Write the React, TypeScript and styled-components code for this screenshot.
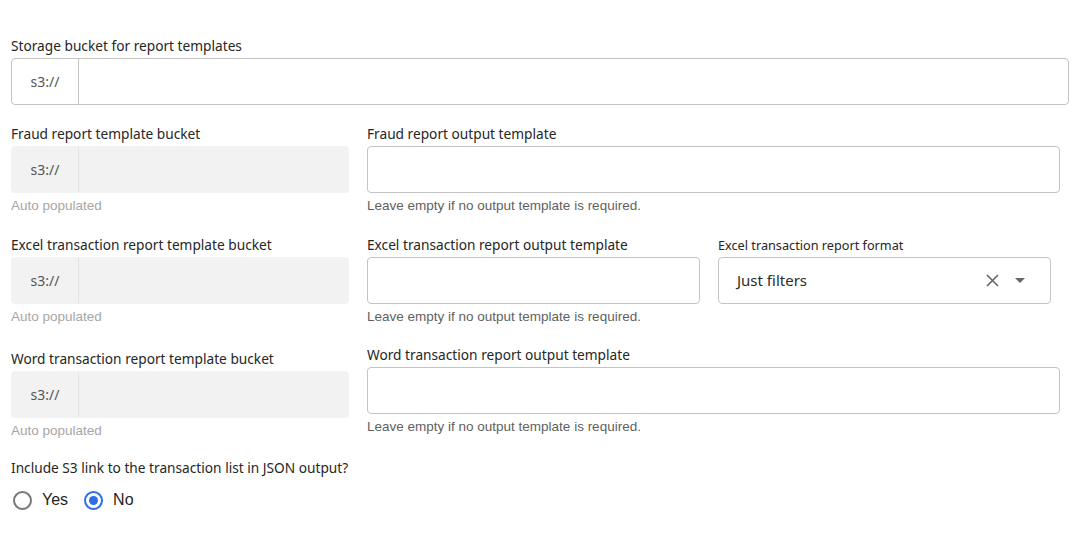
import React from "react";
import styled, { createGlobalStyle } from "styled-components";

const GlobalStyle = createGlobalStyle`
  html, body { margin: 0; padding: 0; background: #ffffff; }
  body { font-family: "Noto Sans", "Open Sans", sans-serif; color: #2b2b2b; }
  * { box-sizing: border-box; }
`;

const Page = styled.div`
  padding: 35px 0 0 11px;
  display: flex;
  flex-direction: column;
`;

const Row = styled.div<{ $gapAfter?: number }>`
  display: flex;
  align-items: flex-start;
  gap: 18px;
  margin-bottom: ${(p) => p.$gapAfter ?? 18}px;
`;

const Field = styled.div<{ $w: number; $offset?: number }>`
  width: ${(p) => p.$w}px;
  display: flex;
  flex-direction: column;
  margin-top: ${(p) => p.$offset ?? 0}px;
`;

const Label = styled.label<{ $small?: boolean }>`
  font-size: ${(p) => (p.$small ? 12.7 : 13.7)}px;
  line-height: 20px;
  height: 21px;
  padding-top: 1px;
  margin-bottom: 2px;
  color: #262626;
  white-space: nowrap;
`;

const InputShell = styled.div<{ $disabled?: boolean }>`
  height: 47px;
  display: flex;
  align-items: stretch;
  border-radius: 4px;
  border: 1px solid ${(p) => (p.$disabled ? "#f2f2f2" : "#c4c4c4")};
  background: ${(p) => (p.$disabled ? "#f2f2f2" : "#ffffff")};
  overflow: hidden;
`;

const Addon = styled.span<{ $disabled?: boolean }>`
  width: 67px;
  flex: none;
  display: flex;
  align-items: center;
  justify-content: center;
  font-size: 14px;
  color: #555555;
  border-right: 1px solid ${(p) => (p.$disabled ? "#e4e4e4" : "#c4c4c4")};
`;

const TextInput = styled.input`
  flex: 1;
  min-width: 0;
  border: none;
  outline: none;
  background: transparent;
  padding: 0 12px;
  font: inherit;
  font-size: 14px;
`;

const Helper = styled.div<{ $muted?: boolean }>`
  margin-top: 3px;
  font-family: "Liberation Sans", Arial, sans-serif;
  font-size: 13.5px;
  line-height: 20px;
  color: ${(p) => (p.$muted ? "#a6a6a6" : "#5f5f5f")};
`;

const SelectBox = styled.div`
  height: 47px;
  display: flex;
  align-items: center;
  border: 1px solid #c4c4c4;
  border-radius: 4px;
  padding: 0 25px 2px 18px;
  font-size: 15px;
  color: #2b2b2b;
`;

const SelectValue = styled.span`
  flex: 1;
`;

const SelectIcons = styled.span`
  display: flex;
  align-items: center;
  gap: 16px;
  padding-top: 2px;
  color: #666666;
`;

const RadioGroup = styled.div`
  display: flex;
  align-items: center;
  gap: 16px;
  margin-top: 8px;
  padding-left: 2px;
  height: 24px;
`;

const RadioOption = styled.label`
  display: flex;
  align-items: center;
  gap: 10px;
  font-family: "Liberation Sans", Arial, sans-serif;
  font-size: 16px;
  color: #1f1f1f;
`;

const RadioDot = styled.span<{ $checked?: boolean }>`
  width: 19px;
  height: 19px;
  border-radius: 50%;
  border: 2px solid ${(p) => (p.$checked ? "#2f6fe4" : "#787878")};
  display: flex;
  align-items: center;
  justify-content: center;
  &::after {
    content: "";
    width: 9px;
    height: 9px;
    border-radius: 50%;
    background: ${(p) => (p.$checked ? "#2f6fe4" : "transparent")};
  }
`;

const BucketInput: React.FC<{ disabled?: boolean }> = ({ disabled }) => (
  <InputShell $disabled={disabled}>
    <Addon $disabled={disabled}>s3://</Addon>
    <TextInput disabled={disabled} />
  </InputShell>
);

const PlainInput: React.FC = () => (
  <InputShell>
    <TextInput />
  </InputShell>
);

const CloseIcon = () => (
  <svg width="13" height="13" viewBox="0 0 13 13" fill="none">
    <path d="M1 1 L12 12 M12 1 L1 12" stroke="#666" strokeWidth="1.6" />
  </svg>
);

const CaretIcon = () => (
  <svg width="10" height="6" viewBox="0 0 10 6">
    <path d="M0 0 H10 L5 5 Z" fill="#666" />
  </svg>
);

const OUTPUT_HINT = "Leave empty if no output template is required.";

export default function App() {
  return (
    <>
      <GlobalStyle />
      <Page>
        <Row>
          <Field $w={1058}>
            <Label>Storage bucket for report templates</Label>
            <BucketInput />
          </Field>
        </Row>

        <Row>
          <Field $w={338}>
            <Label>Fraud report template bucket</Label>
            <BucketInput disabled />
            <Helper $muted>Auto populated</Helper>
          </Field>
          <Field $w={693}>
            <Label>Fraud report output template</Label>
            <PlainInput />
            <Helper>{OUTPUT_HINT}</Helper>
          </Field>
        </Row>

        <Row $gapAfter={17}>
          <Field $w={338}>
            <Label>Excel transaction report template bucket</Label>
            <BucketInput disabled />
            <Helper $muted>Auto populated</Helper>
          </Field>
          <Field $w={333}>
            <Label>Excel transaction report output template</Label>
            <PlainInput />
            <Helper>{OUTPUT_HINT}</Helper>
          </Field>
          <Field $w={333}>
            <Label $small>Excel transaction report format</Label>
            <SelectBox>
              <SelectValue>Just filters</SelectValue>
              <SelectIcons>
                <CloseIcon />
                <CaretIcon />
              </SelectIcons>
            </SelectBox>
          </Field>
        </Row>

        <Row $gapAfter={16}>
          <Field $w={338} $offset={4}>
            <Label>Word transaction report template bucket</Label>
            <BucketInput disabled />
            <Helper $muted>Auto populated</Helper>
          </Field>
          <Field $w={693}>
            <Label>Word transaction report output template</Label>
            <PlainInput />
            <Helper>{OUTPUT_HINT}</Helper>
          </Field>
        </Row>

        <Label>Include S3 link to the transaction list in JSON output?</Label>
        <RadioGroup>
          <RadioOption>
            <RadioDot />
            Yes
          </RadioOption>
          <RadioOption>
            <RadioDot $checked />
            No
          </RadioOption>
        </RadioGroup>
      </Page>
    </>
  );
}
